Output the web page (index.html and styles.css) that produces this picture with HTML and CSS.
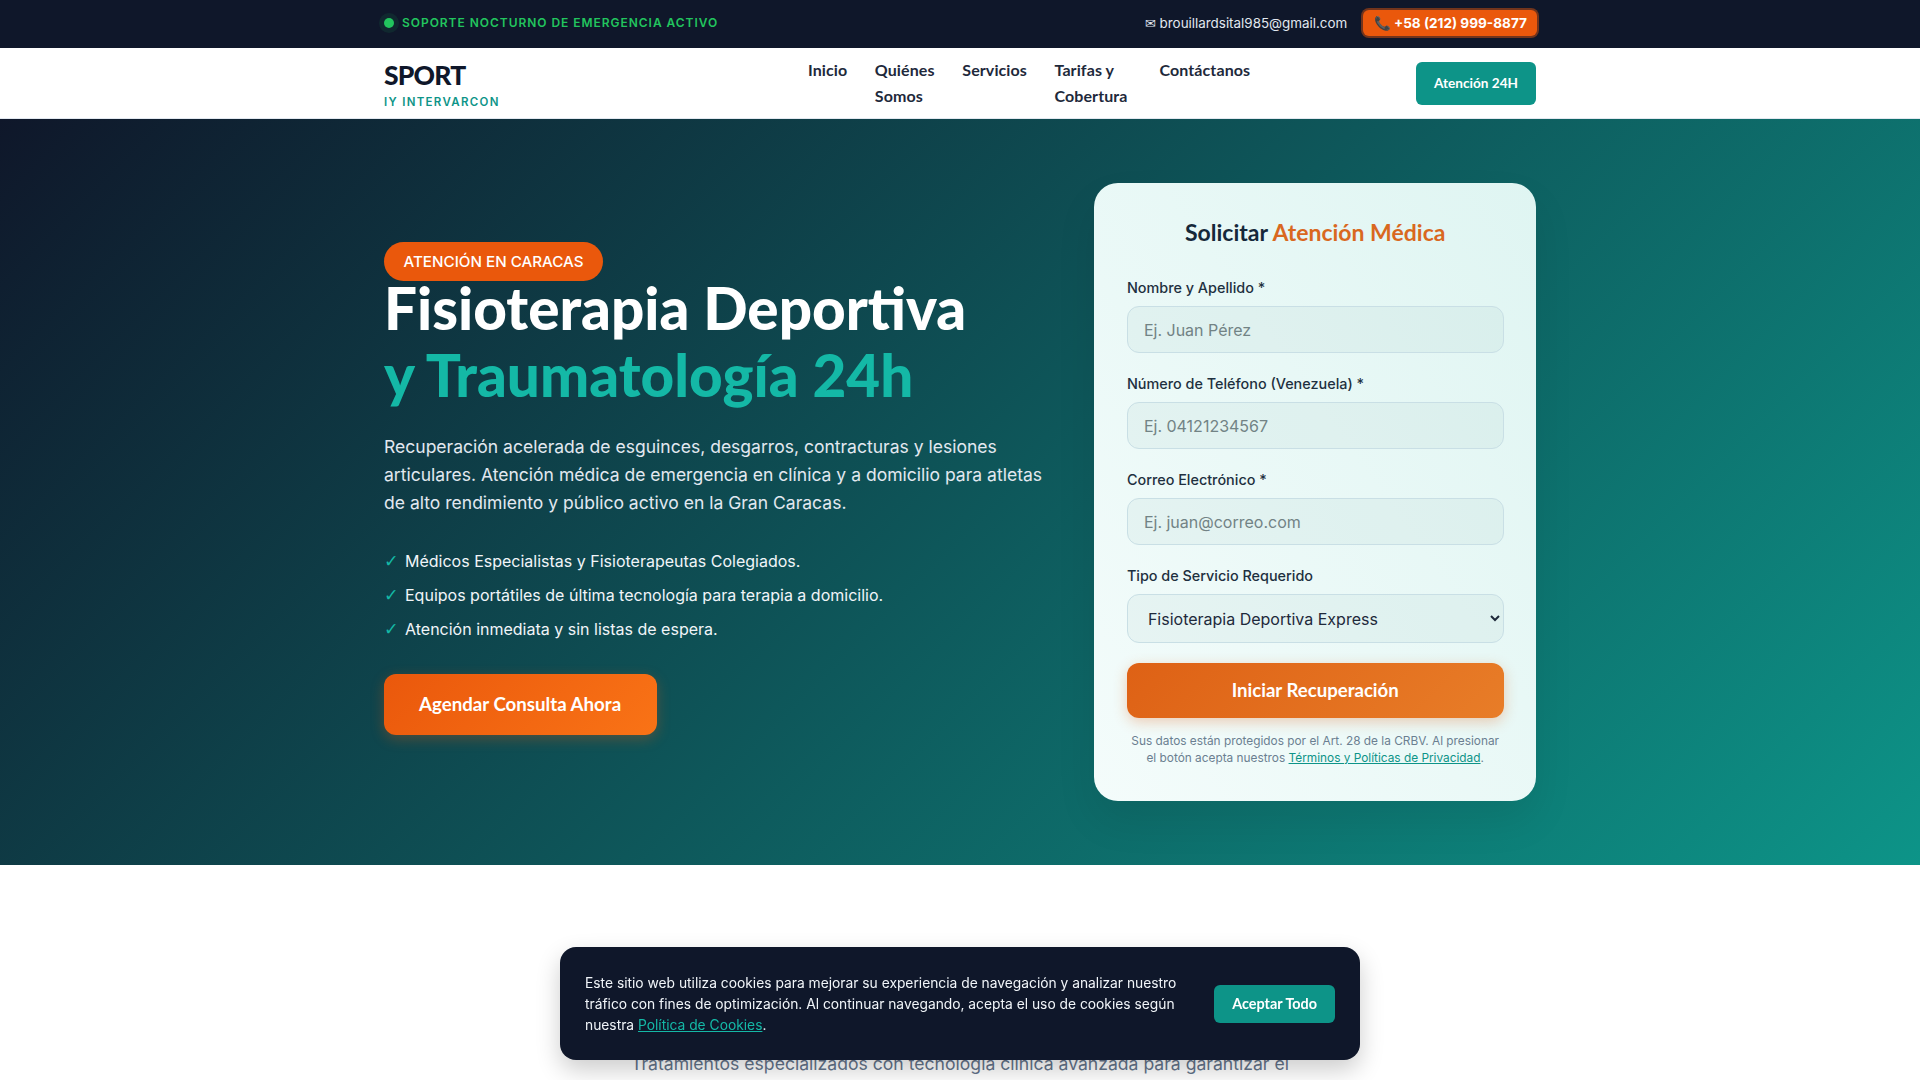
FILE: index.html
```html
<!DOCTYPE html>
<html lang="es">
<head>
  <meta charset="UTF-8" />
  <meta name="viewport" content="width=device-width, initial-scale=1.0" />
  <title>Sport Iy Intervarcon</title>
  <link rel="stylesheet" href="styles.css">
</head>
<body>
  <div class="top-bar">
    <div class="wrap top-inner">
      <div class="status"><span class="status-dot"></span>SOPORTE NOCTURNO DE EMERGENCIA ACTIVO</div>
      <div class="top-contact">
        <a class="top-mail" href="#">✉ brouillardsital985@gmail.com</a>
        <a class="top-phone" href="#">📞 +58 (212) 999-8877</a>
      </div>
    </div>
  </div>

  <nav class="main-nav">
    <div class="wrap nav-inner">
      <a class="logo" href="#">
        <span class="logo-main">SPORT</span>
        <span class="logo-sub">IY INTERVARCON</span>
      </a>
      <ul class="nav-links">
        <li><a href="#">Inicio</a></li>
        <li><a href="#">Quiénes Somos</a></li>
        <li><a href="#">Servicios</a></li>
        <li><a href="#">Tarifas y Cobertura</a></li>
        <li><a href="#">Contáctanos</a></li>
      </ul>
      <a class="nav-cta" href="#">Atención 24H</a>
    </div>
  </nav>

  <section class="hero">
    <div class="wrap hero-grid">
      <div class="hero-copy">
        <span class="badge">ATENCIÓN EN CARACAS</span>
        <h1>Fisioterapia Deportiva <span class="accent">y Traumatología 24h</span></h1>
        <p class="hero-text">Recuperación acelerada de esguinces, desgarros, contracturas y lesiones articulares. Atención médica de emergencia en clínica y a domicilio para atletas de alto rendimiento y público activo en la Gran Caracas.</p>
        <ul class="checks">
          <li><span class="tick">✓</span>Médicos Especialistas y Fisioterapeutas Colegiados.</li>
          <li><span class="tick">✓</span>Equipos portátiles de última tecnología para terapia a domicilio.</li>
          <li><span class="tick">✓</span>Atención inmediata y sin listas de espera.</li>
        </ul>
        <a class="hero-cta" href="#">Agendar Consulta Ahora</a>
      </div>

      <form class="form-card">
        <h2>Solicitar <span class="accent-orange">Atención Médica</span></h2>
        <div class="field">
          <label for="nombre">Nombre y Apellido *</label>
          <input type="text" id="nombre" placeholder="Ej. Juan Pérez">
        </div>
        <div class="field">
          <label for="telefono">Número de Teléfono (Venezuela) *</label>
          <input type="tel" id="telefono" placeholder="Ej. 04121234567">
        </div>
        <div class="field">
          <label for="correo">Correo Electrónico *</label>
          <input type="email" id="correo" placeholder="Ej. juan@correo.com">
        </div>
        <div class="field">
          <label for="servicio">Tipo de Servicio Requerido</label>
          <select id="servicio">
            <option>Fisioterapia Deportiva Express</option>
          </select>
        </div>
        <button class="submit" type="button">Iniciar Recuperación</button>
        <p class="legal">Sus datos están protegidos por el Art. 28 de la CRBV. Al presionar el botón acepta nuestros <a href="#">Términos y Políticas de Privacidad</a>.</p>
      </form>
    </div>
  </section>

  <section class="services">
    <p class="services-intro">Tratamientos especializados con tecnología clínica avanzada para garantizar el</p>
  </section>

  <div class="cookie">
    <p>Este sitio web utiliza cookies para mejorar su experiencia de navegación y analizar nuestro tráfico con fines de optimización. Al continuar navegando, acepta el uso de cookies según nuestra <a href="#">Política de Cookies</a>.</p>
    <button type="button">Aceptar Todo</button>
  </div>
</body>
</html>
```

FILE: styles.css
```css
:root {
  --navy: #0f172a;
  --teal: #0d9488;
  --teal-light: #14b8a6;
  --orange: #ea580c;
  --orange-light: #f97316;
  --slate: #64748b;
  --display: 'Lato', 'Noto Sans', sans-serif;
}

* {
  box-sizing: border-box;
}

body {
  margin: 0;
  font-family: 'Inter', sans-serif;
  color: #1e293b;
  background: #fff;
  overflow-x: hidden;
}

a {
  text-decoration: none;
  color: inherit;
}

.wrap {
  width: 1152px;
  margin: 0 auto;
}

/* top bar */
.top-bar {
  background: var(--navy);
  height: 48px;
}

.top-inner {
  height: 100%;
  padding-bottom: 2px;
  display: flex;
  justify-content: space-between;
  align-items: center;
}

.status {
  display: flex;
  align-items: center;
  gap: 8px;
  font-size: 12px;
  font-weight: 600;
  letter-spacing: 0.96px;
  line-height: 15px;
  padding-bottom: 1px;
  color: #22c55e;
}

.status-dot {
  width: 10px;
  height: 10px;
  border-radius: 50%;
  background: #22c55e;
  box-shadow: 0 0 0 5px rgba(34, 197, 94, 0.1);
}

.top-contact {
  display: flex;
  align-items: center;
  gap: 16px;
}

.top-mail {
  font-size: 13.4px;
  color: #e2e8f0;
}

.top-phone {
  padding: 5px 10px 5px 10.5px;
  background: var(--orange);
  border-radius: 6px;
  box-shadow: 0 0 0 2px rgba(234, 88, 12, 0.45);
  font-size: 13.6px;
  font-weight: 700;
  color: #fff;
  margin-right: -1px;
}

/* nav */
.main-nav {
  background: #fff;
  border-bottom: 1px solid #e2e8f0;
  height: 71px;
}

.nav-inner {
  height: 100%;
  display: flex;
  justify-content: space-between;
  align-items: center;
}

.logo {
  display: flex;
  flex-direction: column;
  width: 300px;
  padding-top: 3px;
}

.logo-main {
  font-family: var(--display);
  font-size: 26.5px;
  font-weight: 900;
  line-height: 30px;
  letter-spacing: -0.8px;
  color: var(--navy);
}

.logo-sub {
  font-size: 11.5px;
  font-weight: 600;
  letter-spacing: 1.3px;
  line-height: 16px;
  margin-top: 4px;
  color: var(--teal);
}

.nav-links {
  display: flex;
  gap: 27.5px;
  list-style: none;
  margin: 0 auto 0 124px;
  padding: 0;
  width: 480px;
  font-family: var(--display);
  font-size: 16px;
  font-weight: 700;
  letter-spacing: 0.1px;
  line-height: 25.6px;
  color: #1e293b;
}

.nav-links li:nth-child(2) {
  width: 60px;
}

.nav-links li:nth-child(4) {
  width: 77.5px;
}

.nav-cta {
  padding: 12px 18px;
  border-radius: 6px;
  background: var(--teal);
  color: #fff;
  font-family: var(--display);
  font-size: 13.6px;
  font-weight: 700;
  line-height: 19px;
}

/* hero */
.hero {
  background: linear-gradient(135deg, var(--navy) 0%, var(--teal) 100%);
  padding: 64px 0;
}

.hero-grid {
  display: grid;
  grid-template-columns: 3fr 2fr;
  gap: 48px;
  align-items: center;
}

.hero-copy {
  padding-bottom: 7px;
}

.badge {
  display: block;
  width: fit-content;
  padding: 10px 19.5px;
  border-radius: 20px;
  background: var(--orange);
  color: #fff;
  font-size: 15.2px;
  font-weight: 500;
  line-height: 19px;
}

h1 {
  margin: -7px 0 24.5px;
  font-family: var(--display);
  font-size: 58.4px;
  font-weight: 900;
  line-height: 67.2px;
  color: #fff;
}

.accent {
  display: block;
  color: var(--teal-light);
}

.hero-text {
  margin: 0 0 31.5px;
  font-size: 17.55px;
  line-height: 28.16px;
  color: #e2e8f0;
}

.checks {
  list-style: none;
  margin: 0 0 33px;
  padding: 0;
  font-size: 16px;
  color: #f1f5f9;
}

.checks li {
  display: flex;
  line-height: 24px;
  margin-bottom: 10px;
}

.tick {
  width: 21px;
  font-family: 'DejaVu Sans', sans-serif;
  font-size: 17.6px;
  color: var(--teal-light);
}

.hero-cta {
  display: inline-block;
  padding: 18px 36px 18px 35px;
  border-radius: 12px;
  background: linear-gradient(135deg, var(--orange), var(--orange-light));
  box-shadow: 0 4px 14px rgba(234, 88, 12, 0.3);
  color: #fff;
  font-family: var(--display);
  font-size: 18.7px;
  font-weight: 700;
  line-height: 25px;
}

/* form */
.form-card {
  padding: 31px 32.5px 34px;
  border-radius: 24px;
  background: linear-gradient(to top right, #f4fcfb, #dff5f2);
  box-shadow: 0 20px 40px rgba(0, 0, 0, 0.08);
}

.form-card h2 {
  margin: 0 0 26px;
  text-align: center;
  font-family: var(--display);
  font-size: 23px;
  font-weight: 700;
  line-height: 36px;
  color: #15283a;
}

.accent-orange {
  color: #d9681f;
}

.field {
  margin-bottom: 19px;
}

.field label {
  display: block;
  margin-bottom: 7px;
  font-size: 14.4px;
  font-weight: 500;
  line-height: 23px;
  color: #1e3040;
}

.field input,
.field select {
  display: block;
  width: 100%;
  padding: 12.5px 16px;
  border: 1px solid #c9dfe5;
  border-radius: 12px;
  background: rgba(15, 90, 100, 0.045);
  font-family: 'Inter', sans-serif;
  font-size: 16px;
  color: #1e293b;
}

.field input::placeholder {
  color: #728385;
}

.submit {
  display: block;
  width: 100%;
  margin-top: 20px;
  padding: 15px;
  border: none;
  border-radius: 12px;
  background: linear-gradient(135deg, #de6115, #e87d28);
  box-shadow: 0 4px 14px rgba(224, 101, 26, 0.3);
  color: #fff;
  font-family: var(--display);
  font-size: 18.6px;
  font-weight: 700;
  line-height: 25px;
}

.legal {
  margin: 15px 0 0;
  text-align: center;
  font-size: 11.85px;
  line-height: 17px;
  color: #6b7f91;
}

.legal a {
  color: var(--teal);
  text-decoration: underline;
}

/* next section, mostly under the cookie notice */
.services {
  background: #fff;
  padding: 185px 0 40px;
}

.services-intro {
  width: 700px;
  margin: 0 auto;
  text-align: center;
  font-size: 17.6px;
  line-height: 28px;
  color: var(--slate);
}

/* cookie notice */
.cookie {
  position: fixed;
  left: 560px;
  bottom: 20px;
  width: 800px;
  display: flex;
  align-items: center;
  justify-content: space-between;
  gap: 32px;
  padding: 26px 25px 24px;
  border-radius: 16px;
  background: var(--navy);
  box-shadow: 0 10px 25px rgba(0, 0, 0, 0.2);
  color: #f1f5f9;
}

.cookie p {
  margin: 0;
  font-size: 13.8px;
  line-height: 21px;
}

.cookie a {
  color: var(--teal-light);
  text-decoration: underline;
}

.cookie button {
  flex: none;
  margin-top: -2px;
  padding: 10px 18px;
  border: none;
  border-radius: 6px;
  background: var(--teal);
  color: #fff;
  font-family: var(--display);
  font-size: 14.4px;
  font-weight: 700;
  line-height: 18px;
}
```
